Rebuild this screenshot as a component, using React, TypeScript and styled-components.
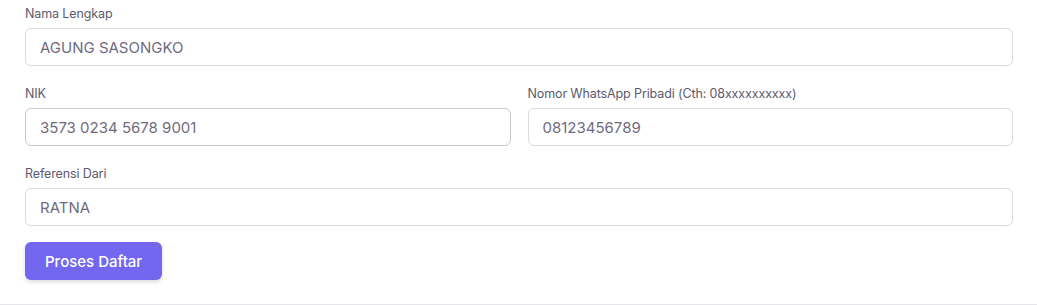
import React from "react";
import styled, { createGlobalStyle } from "styled-components";

const Global = createGlobalStyle`
  html, body { margin: 0; padding: 0; background: #fff; }
  body { font-family: Inter, "Noto Sans", "Liberation Sans", sans-serif; color: #6f6b7d; }
  * { box-sizing: border-box; }
`;

const Page = styled.div`
  width: 1037px;
  height: 305px;
  border-bottom: 1px solid #e6e6ea;
`;

const Form = styled.form`
  display: flex;
  flex-direction: column;
  gap: 19px;
  padding: 5px 24px 0 25px;
`;

const Row = styled.div<{ $cols: number }>`
  display: grid;
  grid-template-columns: repeat(${(p) => p.$cols}, 1fr);
  column-gap: 17px;
`;

const Field = styled.div`
  display: flex;
  flex-direction: column;
  gap: 6px;
`;

const Label = styled.label`
  font-size: 12.5px;
  line-height: 17px;
  color: #5d596c;
  letter-spacing: -0.12px;
`;

const Input = styled.input<{ $dark?: boolean }>`
  height: 38px;
  width: 100%;
  border: 1px solid ${(p) => (p.$dark ? "#c9c7cf" : "#dbdade")};
  border-radius: 6px;
  padding: 0 14px;
  font-family: inherit;
  font-size: 15px;
  color: #6f6b7d;
  background: #fff;
  outline: none;
`;

const Button = styled.button`
  align-self: flex-start;
  margin-top: -3px;
  height: 38px;
  padding: 0 20px;
  border: none;
  border-radius: 6px;
  background: #7367f0;
  color: #fff;
  font-family: inherit;
  font-size: 15px;
  font-weight: 500;
  box-shadow: 0 2px 4px rgba(165, 163, 174, 0.4);
  cursor: pointer;
`;

export default function App() {
  return (
    <Page>
      <Global />
      <Form onSubmit={(e) => e.preventDefault()}>
        <Row $cols={1}>
          <Field>
            <Label>Nama Lengkap</Label>
            <Input defaultValue="AGUNG SASONGKO" />
          </Field>
        </Row>
        <Row $cols={2}>
          <Field>
            <Label>NIK</Label>
            <Input $dark defaultValue="3573 0234 5678 9001" />
          </Field>
          <Field>
            <Label>Nomor WhatsApp Pribadi (Cth: 08xxxxxxxxxx)</Label>
            <Input defaultValue="08123456789" />
          </Field>
        </Row>
        <Row $cols={1}>
          <Field>
            <Label>Referensi Dari</Label>
            <Input defaultValue="RATNA" />
          </Field>
        </Row>
        <Button type="submit">Proses Daftar</Button>
      </Form>
    </Page>
  );
}
